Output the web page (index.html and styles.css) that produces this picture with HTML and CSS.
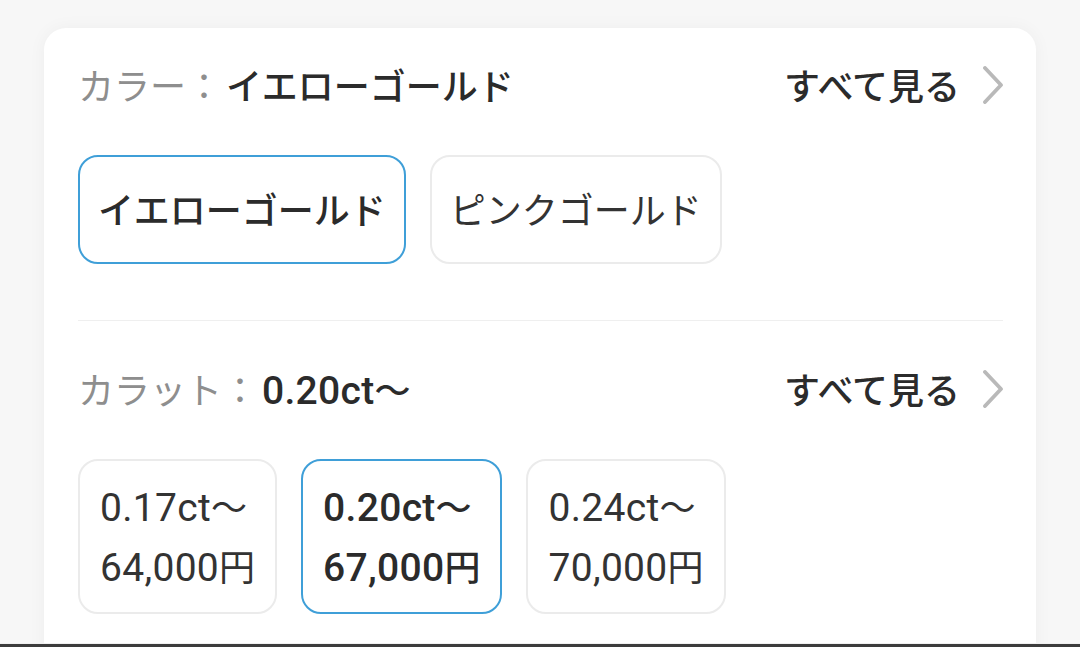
FILE: index.html
```html
<!DOCTYPE html>
<html lang="ja">
<head>
<meta charset="utf-8">
<title>Options</title>
<link rel="stylesheet" href="styles.css">
</head>
<body>
<div class="card">
  <section class="section section-first">
    <div class="section-head">
      <div class="head-title"><span class="label">カラー：</span><span class="value">イエローゴールド</span></div>
      <a class="see-all">すべて見る<svg class="chev" width="22" height="38" viewBox="0 0 22 38"><polyline points="4,2 20,19 4,36" fill="none" stroke="#b9b9b9" stroke-width="3.8" stroke-linecap="round" stroke-linejoin="round"/></svg></a>
    </div>
    <div class="chips">
      <div class="chip chip-color is-selected">イエローゴールド</div>
      <div class="chip chip-color">ピンクゴールド</div>
    </div>
  </section>
  <section class="section">
    <div class="section-head">
      <div class="head-title"><span class="label">カラット：</span><span class="value"><span class="num">0.20ct</span>〜</span></div>
      <a class="see-all">すべて見る<svg class="chev" width="22" height="38" viewBox="0 0 22 38"><polyline points="4,2 20,19 4,36" fill="none" stroke="#b9b9b9" stroke-width="3.8" stroke-linecap="round" stroke-linejoin="round"/></svg></a>
    </div>
    <div class="chips">
      <div class="chip chip-carat"><span class="line"><span class="num">0.17ct</span>〜</span><span class="line"><span class="num">64,000</span>円</span></div>
      <div class="chip chip-carat is-selected"><span class="line"><span class="num">0.20ct</span>〜</span><span class="line"><span class="num">67,000</span>円</span></div>
      <div class="chip chip-carat"><span class="line"><span class="num">0.24ct</span>〜</span><span class="line"><span class="num">70,000</span>円</span></div>
    </div>
  </section>
</div>
<div class="bottom-edge"></div>
</body>
</html>
```

FILE: styles.css
```css
html, body {
  margin: 0;
  padding: 0;
  height: 100%;
  overflow: hidden;
}
body {
  background: #f7f7f7;
  font-family: "Noto Sans CJK JP", "Noto Sans", sans-serif;
  color: #2e2e2e;
  padding-top: 28px;
  box-sizing: border-box;
}
.card {
  margin: 0 44px;
  background: #ffffff;
  border-radius: 22px;
  box-shadow: 0 0 18px rgba(0, 0, 0, 0.045);
  padding: 28px 33px 80px 34px;
}
.section {
  padding: 39px 0 0;
}
.section-first {
  padding-top: 0;
  padding-bottom: 56px;
  border-bottom: 1px solid #efefef;
}
.section-head {
  display: flex;
  align-items: center;
  justify-content: space-between;
  height: 56px;
  font-size: 36px;
  line-height: 56px;
}
.head-title .label {
  color: #8e8e8e;
  font-weight: 400;
  margin-right: 4px;
}
.head-title .value {
  font-weight: 500;
  color: #2b2b2b;
}
.num {
  font-family: Roboto, "Noto Sans", sans-serif;
  font-size: 39px;
  line-height: 1;
  letter-spacing: 0.3px;
}
.see-all {
  display: flex;
  align-items: center;
  gap: 21px;
  font-weight: 500;
  color: #2b2b2b;
}
.chev {
  display: block;
  margin-top: 2px;
}
.chips {
  display: flex;
  gap: 24px;
  margin-top: 43px;
}
.chip {
  background: #fff;
  border: 2px solid #ebebeb;
  border-radius: 20px;
  color: #333;
  font-weight: 400;
}
.chip.is-selected {
  border-color: #3f9fd8;
  font-weight: 500;
  color: #2b2b2b;
}
.chip-color {
  height: 102px;
  box-sizing: content-box;
  display: flex;
  align-items: center;
  padding: 0 18px 3px;
  font-size: 36px;
  line-height: 1;
}
.chip-carat {
  display: flex;
  flex-direction: column;
  padding: 14px 20px 17px;
  font-size: 36px;
}
.chip-carat .line {
  display: block;
  height: 60px;
  line-height: 60px;
}
.bottom-edge {
  position: fixed;
  left: 0;
  right: 0;
  bottom: 0;
  height: 3px;
  background: #3c3c3c;
  border-top: 1px solid #f0f0f0;
}
```
